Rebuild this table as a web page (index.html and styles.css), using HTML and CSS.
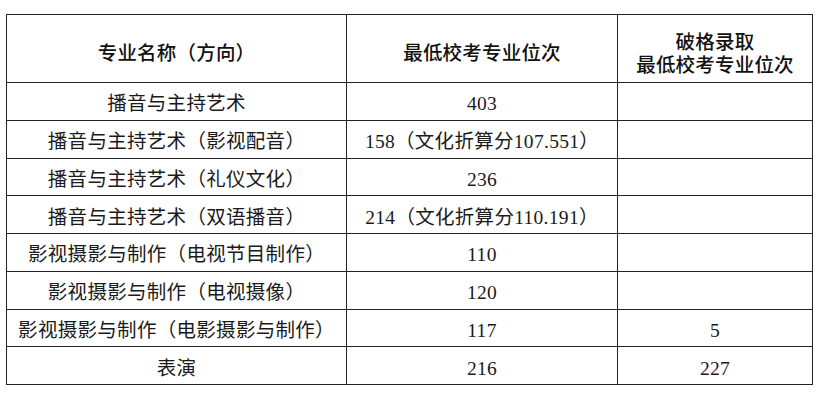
FILE: index.html
```html
<!DOCTYPE html>
<html lang="zh-CN">
<head>
<meta charset="utf-8">
<title>最低校考专业位次</title>
<link rel="stylesheet" href="styles.css">
</head>
<body>
<table class="rank-table">
  <colgroup>
    <col class="col-name">
    <col class="col-rank">
    <col class="col-break">
  </colgroup>
  <thead>
    <tr class="head-row">
      <th>专业名称（方向）</th>
      <th>最低校考专业位次</th>
      <th><span class="head-line">破格录取</span><span class="head-line">最低校考专业位次</span></th>
    </tr>
  </thead>
  <tbody>
    <tr><td>播音与主持艺术</td><td>403</td><td></td></tr>
    <tr><td>播音与主持艺术（影视配音）</td><td>158（文化折算分107.551）</td><td></td></tr>
    <tr><td>播音与主持艺术（礼仪文化）</td><td>236</td><td></td></tr>
    <tr><td>播音与主持艺术（双语播音）</td><td>214（文化折算分110.191）</td><td></td></tr>
    <tr><td>影视摄影与制作（电视节目制作）</td><td>110</td><td></td></tr>
    <tr><td>影视摄影与制作（电视摄像）</td><td>120</td><td></td></tr>
    <tr><td>影视摄影与制作（电影摄影与制作）</td><td>117</td><td>5</td></tr>
    <tr><td>表演</td><td>216</td><td>227</td></tr>
  </tbody>
</table>
</body>
</html>
```

FILE: styles.css
```css
html, body {
  margin: 0;
  padding: 0;
  background: #ffffff;
}

body {
  padding: 14px 0 0 6px;
  font-family: "Liberation Serif", "Noto Sans CJK SC", serif;
  color: #1a1a1a;
}

.rank-table {
  width: 806px;
  table-layout: fixed;
  border-collapse: collapse;
  border: 1.5px solid #222;
}

.col-name { width: 340px; }
.col-rank { width: 271px; }
.col-break { width: 195px; }

.rank-table th,
.rank-table td {
  border: 1.5px solid #222;
  text-align: center;
  vertical-align: middle;
  padding: 0;
  white-space: nowrap;
}

.rank-table th {
  font-family: "Noto Sans CJK SC", sans-serif;
  font-weight: 500;
  font-size: 19.5px;
  line-height: 24px;
  padding-top: 6px;
  color: #111;
  letter-spacing: 0.2px;
}

.head-line {
  display: block;
  height: 23px;
  line-height: 23px;
}

.head-row {
  height: 68px;
}

.rank-table tbody tr {
  height: 37.75px;
}

.rank-table td {
  font-size: 19.5px;
  line-height: 22px;
  padding-top: 6px;
  font-weight: 400;
  letter-spacing: 0.3px;
}
```
